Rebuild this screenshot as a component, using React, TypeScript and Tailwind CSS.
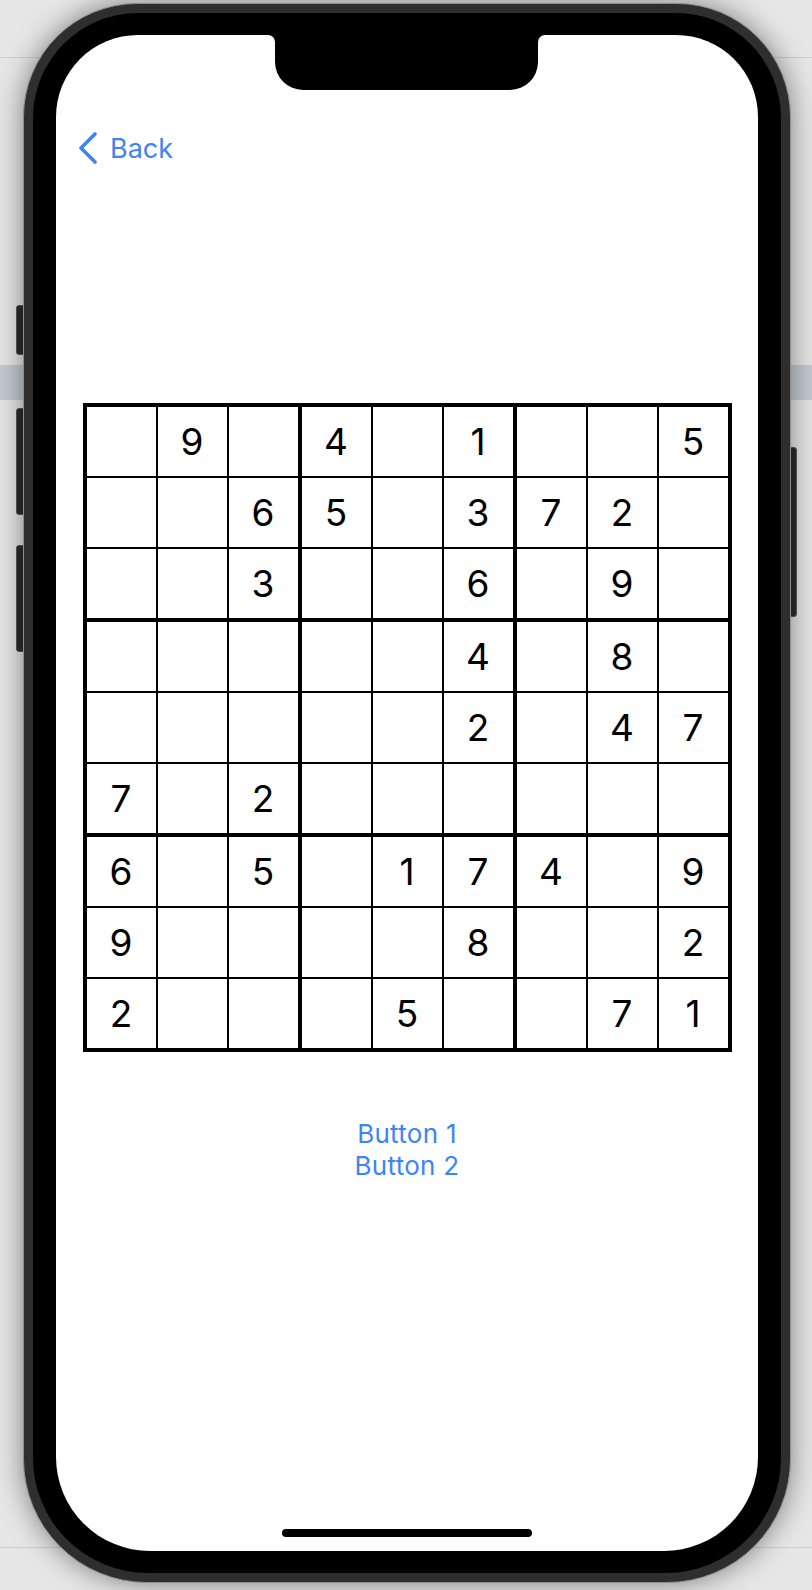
import React from "react";

const PUZZLE: string[] = [
  ".9.4.1..5",
  "..65.372.",
  "..3..6.9.",
  ".....4.8.",
  ".....2.47",
  "7.2......",
  "6.5.174.9",
  "9....8..2",
  "2...5..71",
];

const FONT = { fontFamily: "Inter, 'Noto Sans', 'Liberation Sans', sans-serif" };

function Box({ br, bc }: { br: number; bc: number }) {
  const cells: React.ReactNode[] = [];
  for (let r = 0; r < 3; r++) {
    for (let c = 0; c < 3; c++) {
      const ch = PUZZLE[br * 3 + r][bc * 3 + c];
      cells.push(
        <div
          key={`${r}-${c}`}
          className="flex items-center justify-center bg-white text-[37px] leading-none text-black"
        >
          {ch === "." ? "" : ch}
        </div>
      );
    }
  }
  return <div className="grid grid-cols-3 grid-rows-3 gap-[2px] bg-black">{cells}</div>;
}

function Board() {
  const boxes: React.ReactNode[] = [];
  for (let br = 0; br < 3; br++) {
    for (let bc = 0; bc < 3; bc++) {
      boxes.push(<Box key={`${br}-${bc}`} br={br} bc={bc} />);
    }
  }
  return (
    <div className="grid h-[649px] w-[649px] grid-cols-3 grid-rows-3 gap-[4px] bg-black p-[4px]">
      {boxes}
    </div>
  );
}

function Notch() {
  return (
    <div className="absolute left-[219px] top-0 h-[55px] w-[263px] rounded-b-[28px] bg-black">
      <svg className="absolute left-[-7px] top-0" width="7" height="7" viewBox="0 0 7 7">
        <path d="M0 0 L7 0 L7 7 A7 7 0 0 0 0 0 Z" fill="#000" />
      </svg>
      <svg className="absolute right-[-7px] top-0" width="7" height="7" viewBox="0 0 7 7">
        <path d="M7 0 L0 0 L0 7 A7 7 0 0 1 7 0 Z" fill="#000" />
      </svg>
    </div>
  );
}

export default function App() {
  return (
    <div className="relative h-[1590px] w-[812px] overflow-hidden bg-[#e6e6e6]" style={FONT}>
      {/* desktop behind the device */}
      <div className="flex flex-col">
        <div className="h-[57px]" />
        <div className="h-px bg-[#cfcfcf]" />
        <div className="h-[307px]" />
        <div className="h-[35px] bg-[#c4c9d4]" />
        <div className="h-[1147px]" />
        <div className="h-px bg-[#cfcfcf]" />
      </div>

      {/* hardware buttons */}
      <div className="absolute left-[16px] top-[305px] h-[50px] w-[10px] rounded-[3px] border border-[#5a5a5a] bg-[#2c2c2c]" />
      <div className="absolute left-[16px] top-[408px] h-[107px] w-[10px] rounded-[3px] border border-[#5a5a5a] bg-[#2c2c2c]" />
      <div className="absolute left-[16px] top-[545px] h-[107px] w-[10px] rounded-[3px] border border-[#5a5a5a] bg-[#2c2c2c]" />
      <div className="absolute left-[786px] top-[447px] h-[170px] w-[11px] rounded-[3px] border border-[#5a5a5a] bg-[#2c2c2c]" />

      {/* device */}
      <div className="absolute left-[23px] top-[3px] h-[1580px] w-[768px] rounded-t-[114px] rounded-b-[124px] border border-[#8e8e8e] bg-[#2e2e2e] p-[9px] shadow-[0_0_28px_rgba(0,0,0,0.45)]">
        <div className="h-full w-full rounded-t-[105px] rounded-b-[115px] bg-black px-[23px] py-[22px]">
          <div className="relative flex h-full w-full flex-col items-center overflow-hidden rounded-t-[82px] rounded-b-[94px] bg-white">
            <Notch />

            <div className="mt-[97px] flex h-[32px] w-full items-center pl-[22px] text-[#3d84f5]">
              <svg width="20" height="32" viewBox="0 0 20 32" fill="none">
                <path
                  d="M17 2 L3 16 L17 30"
                  stroke="currentColor"
                  strokeWidth="3.6"
                  strokeLinecap="round"
                  strokeLinejoin="round"
                />
              </svg>
              <span className="ml-[12px] text-[27px] leading-none">Back</span>
            </div>

            <div className="mt-[239px]">
              <Board />
            </div>

            <div className="mt-[66px] flex flex-col items-center text-[26px] leading-[32px] tracking-[0.3px] text-[#3d84f5]">
              <span>Button 1</span>
              <span>Button 2</span>
            </div>

            <div className="flex-1" />
            <div className="mb-[14px] h-[8px] w-[250px] rounded-full bg-black" />
          </div>
        </div>
      </div>
    </div>
  );
}
